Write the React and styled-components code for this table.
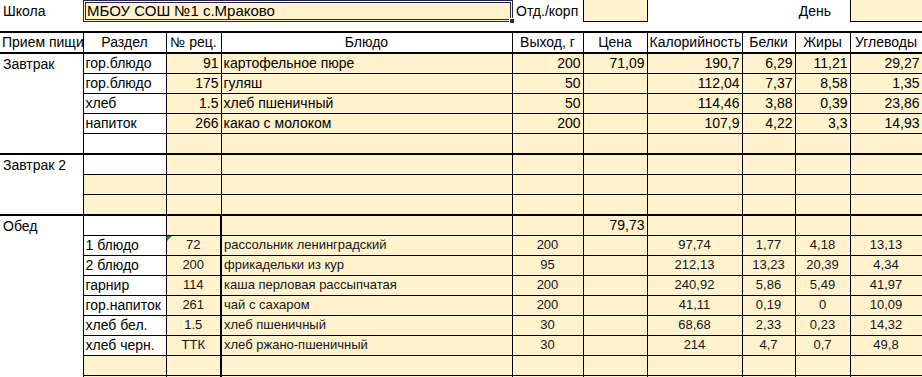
import React from "react";
import styled, { createGlobalStyle } from "styled-components";

const GlobalStyle = createGlobalStyle`
  html, body {
    margin: 0;
    padding: 0;
    background: #fff;
    overflow: hidden;
  }
  body {
    font-family: "Liberation Sans", Arial, sans-serif;
    color: #000;
  }
`;

const YELLOW = "#fff2cc";
const UPPER_FONT = `"Liberation Sans", Arial, sans-serif`;
const LOWER_FONT = `"Liberation Sans", Arial, sans-serif`;

const COLUMNS = [83, 83, 55, 291, 71, 64, 95, 53, 55, 72];

const HEADERS = [
  "Раздел",
  "№ рец.",
  "Блюдо",
  "Выход, г",
  "Цена",
  "Калорийность",
  "Белки",
  "Жиры",
  "Углеводы",
];

const MEALS = [
  {
    name: "Завтрак",
    style: "upper",
    rows: [
      { section: "гор.блюдо", rec: "91", dish: "картофельное пюре", out: "200", price: "71,09", kcal: "190,7", p: "6,29", f: "11,21", c: "29,27" },
      { section: "гор.блюдо", rec: "175", dish: "гуляш", out: "50", kcal: "112,04", p: "7,37", f: "8,58", c: "1,35" },
      { section: "хлеб", rec: "1.5", dish: "хлеб пшеничный", out: "50", kcal: "114,46", p: "3,88", f: "0,39", c: "23,86" },
      { section: "напиток", rec: "266", dish: "какао с молоком", out: "200", kcal: "107,9", p: "4,22", f: "3,3", c: "14,93" },
      { white: true },
    ],
  },
  {
    name: "Завтрак 2",
    style: "upper",
    rows: [{ white: true }, {}, {}],
  },
  {
    name: "Обед",
    style: "lower",
    rows: [
      { white: true, price: "79,73" },
      { section: "1 блюдо", rec: "72", flag: true, dish: "рассольник ленинградский", out: "200", kcal: "97,74", p: "1,77", f: "4,18", c: "13,13" },
      { section: "2 блюдо", rec: "200", dish: "фрикадельки из кур", out: "95", kcal: "212,13", p: "13,23", f: "20,39", c: "4,34" },
      { section: "гарнир", rec: "114", dish: "каша перловая рассыпчатая", out: "200", kcal: "240,92", p: "5,86", f: "5,49", c: "41,97" },
      { section: "гор.напиток", rec: "261", dish: "чай с сахаром", out: "200", kcal: "41,11", p: "0,19", f: "0", c: "10,09" },
      { section: "хлеб бел.", rec: "1.5", dish: "хлеб пшеничный", out: "30", kcal: "68,68", p: "2,33", f: "0,23", c: "14,32" },
      { section: "хлеб черн.", rec: "ТТК", dish: "хлеб ржано-пшеничный", out: "30", kcal: "214", p: "4,7", f: "0,7", c: "49,8" },
      {},
      {},
    ],
  },
];

const Sheet = styled.div`
  width: 922px;
`;

const TopBar = styled.div`
  display: flex;
  align-items: flex-start;
  height: 31px;
  font-family: ${UPPER_FONT};
  font-size: 14px;
`;

const TopLabel = styled.div`
  width: ${(p) => p.$width}px;
  height: 22px;
  line-height: 23px;
  padding: ${(p) => (p.$right ? "0 19px 0 0" : "0 0 0 3px")};
  box-sizing: border-box;
  text-align: ${(p) => (p.$right ? "right" : "left")};
  white-space: nowrap;
`;

const SchoolBox = styled.div`
  position: relative;
  width: 430px;
  height: 22px;
  box-sizing: border-box;
  border: 3px double #1f2a44;
  background: ${YELLOW};
  padding-left: 1px;
  font-size: 15px;
  line-height: 16px;
  white-space: nowrap;

  &::after {
    content: "";
    position: absolute;
    right: -5px;
    bottom: -5px;
    width: 4px;
    height: 4px;
    background: #1f2a44;
    border: 1px solid #fff;
  }
`;

const InputBox = styled.div`
  width: ${(p) => p.$width}px;
  height: 22px;
  box-sizing: border-box;
  border: 1px solid #000;
  border-top: none;
  border-right: ${(p) => (p.$open ? "none" : "1px solid #000")};
  background: ${YELLOW};
`;

const Table = styled.table`
  width: 922px;
  table-layout: fixed;
  border-collapse: collapse;
`;

const HeadCell = styled.th`
  height: 18px;
  padding: 0 2px 1px;
  border: 1px solid #000;
  border-top: 2px solid #000;
  border-bottom: 2px solid #000;
  border-left: ${(p) => (p.$first ? "none" : "1px solid #000")};
  background: #fff;
  font-family: ${UPPER_FONT};
  font-size: 14px;
  font-weight: normal;
  text-align: ${(p) => (p.$first ? "left" : "center")};
  vertical-align: bottom;
  line-height: 17px;
  white-space: nowrap;
  overflow: hidden;
`;

const MealCell = styled.td`
  padding: 1px 3px 0;
  border-top: 2px solid #000;
  border-right: 1px solid #000;
  background: #fff;
  font-family: ${UPPER_FONT};
  font-size: 14px;
  vertical-align: top;
  line-height: 18px;
  white-space: nowrap;
`;

const Cell = styled.td`
  position: relative;
  height: 18px;
  padding: 0 2px 1px;
  border: 1px solid #000;
  border-top: ${(p) => (p.$thick ? "2px" : "1px")} solid #000;
  border-left-width: ${(p) => (p.$heavyLeft ? "2px" : "1px")};
  background: ${(p) => (p.$white ? "#fff" : YELLOW)};
  font-family: ${(p) => (p.$lower ? LOWER_FONT : UPPER_FONT)};
  font-size: ${(p) => (p.$lower ? "13px" : "14px")};
  color: ${(p) => (p.$lower ? "#14141c" : "#000")};
  text-align: ${(p) => p.$align || "left"};
  vertical-align: ${(p) => (p.$lower ? "top" : "bottom")};
  line-height: 17px;
  white-space: nowrap;
  overflow: hidden;

  &::before {
    content: "";
    display: ${(p) => (p.$flag ? "block" : "none")};
    position: absolute;
    left: 0;
    top: 0;
    border-top: 5px solid #1e8a3c;
    border-right: 5px solid transparent;
  }
`;

const FIELDS = ["rec", "dish", "out", "price", "kcal", "p", "f", "c"];

function alignFor(field, lower) {
  if (field === "dish") return "left";
  if (field === "price") return "right";
  return lower ? "center" : "right";
}

function MealRows({ meal }) {
  const lower = meal.style === "lower";
  return meal.rows.map((row, i) => (
    <tr key={i}>
      {i === 0 && <MealCell rowSpan={meal.rows.length}>{meal.name}</MealCell>}
      <Cell $thick={i === 0} $white={row.white || !!row.section}>
        {row.section}
      </Cell>
      {FIELDS.map((field) => (
        <Cell
          key={field}
          $thick={i === 0}
          $lower={lower && field !== "price"}
          $align={alignFor(field, lower)}
          $heavyLeft={lower && field === "dish"}
          $flag={field === "rec" && row.flag}
        >
          {row[field]}
        </Cell>
      ))}
    </tr>
  ));
}

export default function App() {
  return (
    <>
      <GlobalStyle />
      <Sheet>
        <TopBar>
          <TopLabel $width={83}>Школа</TopLabel>
          <SchoolBox>МБОУ СОШ №1 с.Мраково</SchoolBox>
          <TopLabel $width={70}>Отд./корп</TopLabel>
          <InputBox $width={65} />
          <TopLabel $width={202} $right>
            День
          </TopLabel>
          <InputBox $width={72} $open />
        </TopBar>
        <Table>
          <colgroup>
            {COLUMNS.map((w, i) => (
              <col key={i} style={{ width: w }} />
            ))}
          </colgroup>
          <thead>
            <tr>
              <HeadCell $first>Прием пищи</HeadCell>
              {HEADERS.map((h) => (
                <HeadCell key={h}>{h}</HeadCell>
              ))}
            </tr>
          </thead>
          <tbody>
            {MEALS.map((meal) => (
              <MealRows key={meal.name} meal={meal} />
            ))}
          </tbody>
        </Table>
      </Sheet>
    </>
  );
}
